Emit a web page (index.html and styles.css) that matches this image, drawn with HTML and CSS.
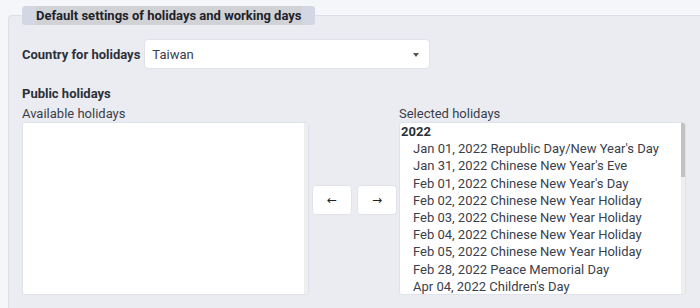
FILE: index.html
```html
<!DOCTYPE html>
<html lang="en">

<head>
  <meta charset="UTF-8">
  <title>Holidays</title>
  <link rel="stylesheet" href="styles.css">
</head>
<body>
  <fieldset class="settings">
    <legend><span>Default settings of holidays and working days</span></legend>

    <div class="country-row">
      <label class="bold-label" for="country">Country for holidays</label>
      <div class="select">
        <span>Taiwan</span>
        <i class="caret"></i>
      </div>
    </div>

    <div class="bold-label public">Public holidays</div>

    <div class="picker">
      <div class="col">
        <div class="list-label">Available holidays</div>
        <div class="list">
          <div class="options"></div>
          <div class="track"></div>
        </div>
      </div>
      <div class="buttons">
        <button type="button">&larr;</button>
        <button type="button">&rarr;</button>
      </div>
      <div class="col">
        <div class="list-label">Selected holidays</div>
        <div class="list">
          <div class="options">
            <div class="group">2022</div>
            <div class="item">Jan 01, 2022 Republic Day/New Year's Day</div>
            <div class="item">Jan 31, 2022 Chinese New Year's Eve</div>
            <div class="item">Feb 01, 2022 Chinese New Year's Day</div>
            <div class="item">Feb 02, 2022 Chinese New Year Holiday</div>
            <div class="item">Feb 03, 2022 Chinese New Year Holiday</div>
            <div class="item">Feb 04, 2022 Chinese New Year Holiday</div>
            <div class="item">Feb 05, 2022 Chinese New Year Holiday</div>
            <div class="item">Feb 28, 2022 Peace Memorial Day</div>
            <div class="item">Apr 04, 2022 Children's Day</div>
          </div>
          <div class="track"><div class="thumb"></div></div>
        </div>
      </div>
    </div>
  </fieldset>
</body>

</html>
```

FILE: styles.css
```css
* {
  box-sizing: border-box;
}

html {
  overflow: hidden;
}

body {
  margin: 0;
  padding-top: 6px;
  background: #f5f6f9;
  font-family: Roboto, "Liberation Sans", sans-serif;
  font-size: 13px;
  color: #333a45;
}

.settings {
  width: 720px;
  margin: 0 0 0 8px;
  padding: 14px 13px 20px;
  border: 1px solid #dcdfe7;
  border-radius: 4px;
  background: #ebecf1;
}

.settings legend {
  padding: 0 13px 0 14px;
  height: 19px;
  line-height: 19px;
  background: #d2d7e3;
  border-radius: 3px;
  font-weight: bold;
  color: #1e222a;
}

.settings legend span {
  display: inline-block;
  background: #d1d2d6;
}

.bold-label {
  font-weight: bold;
  color: #2b3039;
}

.country-row {
  display: flex;
  align-items: center;
  gap: 4px;
}

.select {
  width: 286px;
  height: 30px;
  display: flex;
  align-items: center;
  justify-content: space-between;
  padding: 0 10px 0 7px;
  background: #fff;
  border: 1px solid #dfe2ea;
  border-radius: 4px;
  color: #3a404b;
}

.caret {
  width: 0;
  height: 0;
  border-left: 3.5px solid transparent;
  border-right: 3.5px solid transparent;
  border-top: 4px solid #555;
  margin-top: 2px;
}

.public {
  margin-top: 16px;
  line-height: 17px;
}

.picker {
  display: flex;
  align-items: center;
  margin-top: 3px;
}

.col {
  width: 287px;
}

.list-label {
  line-height: 17px;
  color: #3a404b;
}

.list {
  height: 173px;
  display: flex;
  background: #fff;
  border: 1px solid #dfe2ea;
  border-radius: 3px;
  overflow: hidden;
  line-height: 17.2px;
  color: #3a404b;
}

.options {
  flex: 1;
  overflow: hidden;
}

.track {
  width: 4px;
  background: #eeeeee;
}

.thumb {
  height: 54px;
  background: #c2c2c2;
}

.group {
  padding-left: 1px;
  font-weight: bold;
  color: #2b3039;
}

.item {
  padding-left: 13px;
  white-space: nowrap;
}

.buttons {
  display: flex;
  gap: 5px;
  margin: 0 2px 0 3px;
}

.buttons button {
  width: 40px;
  height: 30px;
  background: #fff;
  border: 1px solid #e0e3ea;
  border-radius: 4px;
  font-family: "DejaVu Sans", sans-serif;
  font-size: 12px;
  color: #222;
  padding: 0;
}
```
